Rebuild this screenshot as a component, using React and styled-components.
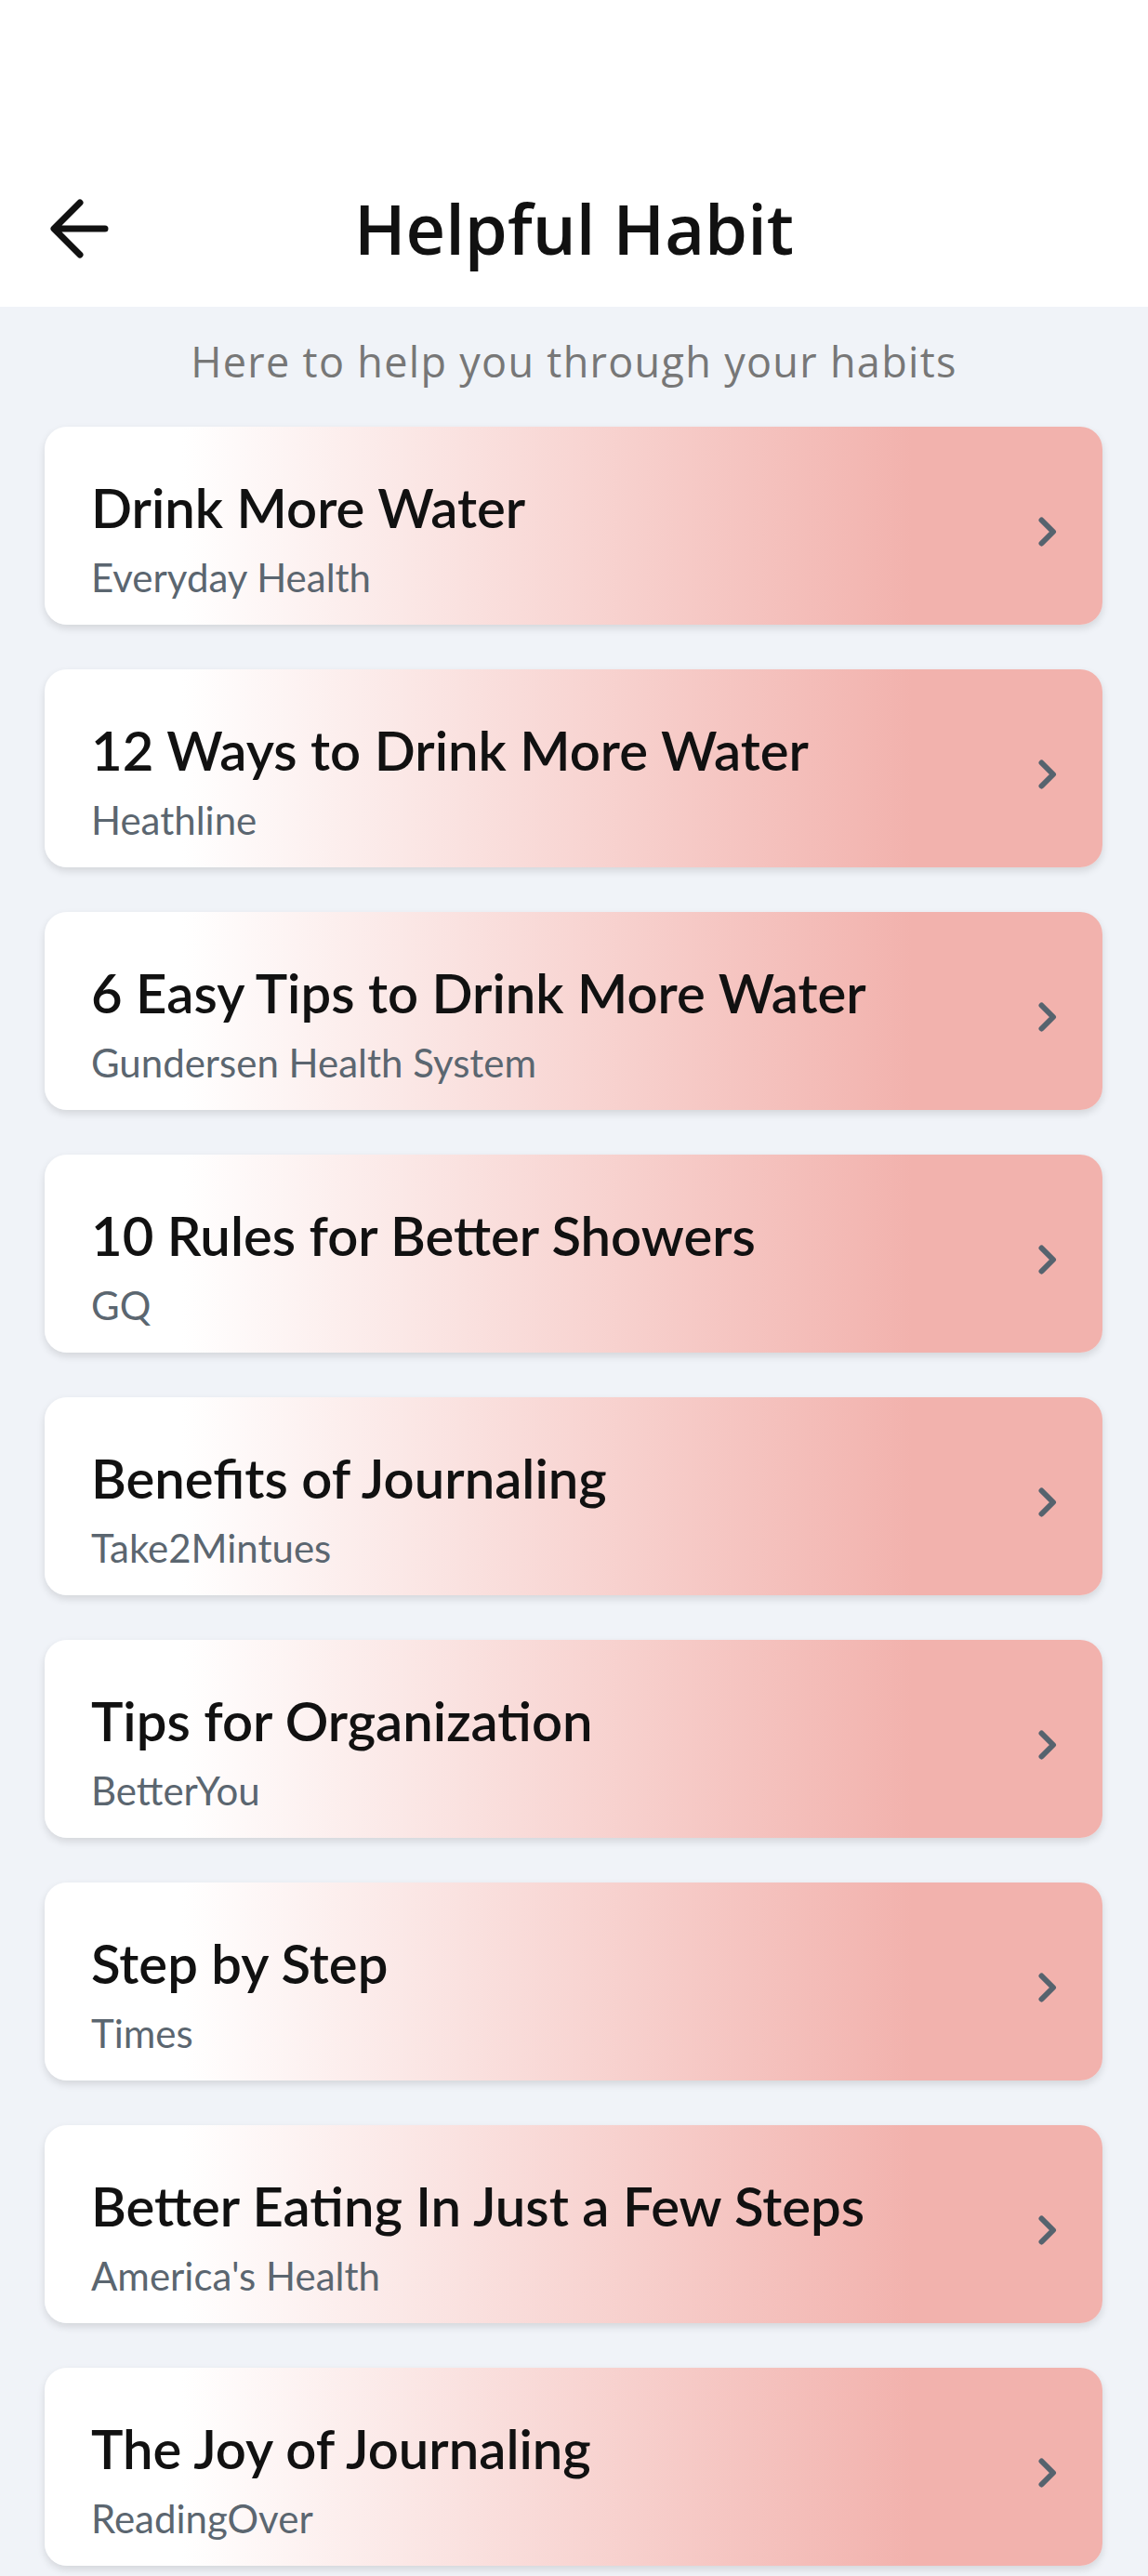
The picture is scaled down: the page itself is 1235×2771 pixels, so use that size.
import styled, { createGlobalStyle } from 'styled-components'

const GlobalStyle = createGlobalStyle`
    body {
        margin: 0;
        background: #f0f3f8;
        font-family: 'Lato', 'Noto Sans', sans-serif;
    }
`

const articles = [
    { title: 'Drink More Water', source: 'Everyday Health' },
    { title: '12 Ways to Drink More Water', source: 'Heathline' },
    { title: '6 Easy Tips to Drink More Water', source: 'Gundersen Health System' },
    { title: '10 Rules for Better Showers', source: 'GQ' },
    { title: 'Benefits of Journaling', source: 'Take2Mintues' },
    { title: 'Tips for Organization', source: 'BetterYou' },
    { title: 'Step by Step', source: 'Times' },
    { title: 'Better Eating In Just a Few Steps', source: "America's Health" },
    { title: 'The Joy of Journaling', source: 'ReadingOver' },
]

const BackArrow = () => (
    <svg width="70" height="66" viewBox="0 0 70 66" fill="none">
        <path d="M64 33H10 M37 5 L9 33 L37 61" stroke="#111" strokeWidth="7" strokeLinecap="round" strokeLinejoin="round" />
    </svg>
)

const Chevron = () => (
    <svg width="20" height="32" viewBox="0 0 20 32" fill="none">
        <path d="M3.5 3.5 L16 16 L3.5 28.5" stroke="#56636e" strokeWidth="6" strokeLinecap="round" strokeLinejoin="round" />
    </svg>
)

const App = () => {
    return (
        <>
            <GlobalStyle />
            <Page>
                <Header>
                    <BackButton><BackArrow /></BackButton>
                    <Title>Helpful Habit</Title>
                    <span />
                </Header>
                <Tagline>Here to help you through your habits</Tagline>
                <List>
                    {articles.map((a) => (
                        <Card key={a.title}>
                            <CardText>
                                <CardTitle>{a.title}</CardTitle>
                                <CardSource>{a.source}</CardSource>
                            </CardText>
                            <Chevron />
                        </Card>
                    ))}
                </List>
            </Page>
        </>
    )
}

const Page = styled.div`
    min-height: 2771px;
    background: #f0f3f8;
`

const Header = styled.header`
    height: 330px;
    box-sizing: border-box;
    padding-top: 162px;
    background: #fff;
    display: grid;
    grid-template-columns: 1fr auto 1fr;
    align-items: center;
`

const BackButton = styled.div`
    display: flex;
    align-items: center;
    padding-left: 49px;
`

const Title = styled.h1`
    margin: 0;
    font-family: 'Open Sans', 'Noto Sans', sans-serif;
    font-size: 74px;
    font-weight: 600;
    line-height: 90px;
    color: #111;
`

const Tagline = styled.p`
    margin: 0;
    padding: 29px 0 40px;
    text-align: center;
    font-family: 'Open Sans', 'Noto Sans', sans-serif;
    font-size: 45px;
    line-height: 60px;
    letter-spacing: 1.3px;
    color: #777;
`

const List = styled.div`
    display: flex;
    flex-direction: column;
    gap: 48px;
    padding: 0 49px 11px 48px;
`

const Card = styled.div`
    height: 213px;
    box-sizing: border-box;
    border-radius: 24px;
    padding: 0 49px 0 50px;
    display: flex;
    align-items: center;
    justify-content: space-between;
    background: linear-gradient(90deg, #ffffff 13%, #f2b2ad 82%);
    box-shadow: 0 4px 8px rgba(0, 0, 0, 0.12);

    svg {
        margin-top: 13px;
        flex-shrink: 0;
    }
`

const CardText = styled.div`
    align-self: flex-start;
    padding-top: 53px;
    display: flex;
    flex-direction: column;
    gap: 18px;
`

const CardTitle = styled.div`
    font-size: 58px;
    font-weight: 600;
    line-height: 67px;
    color: #111;
`

const CardSource = styled.div`
    font-size: 42px;
    line-height: 48px;
    color: #5b6670;
`

export default App
